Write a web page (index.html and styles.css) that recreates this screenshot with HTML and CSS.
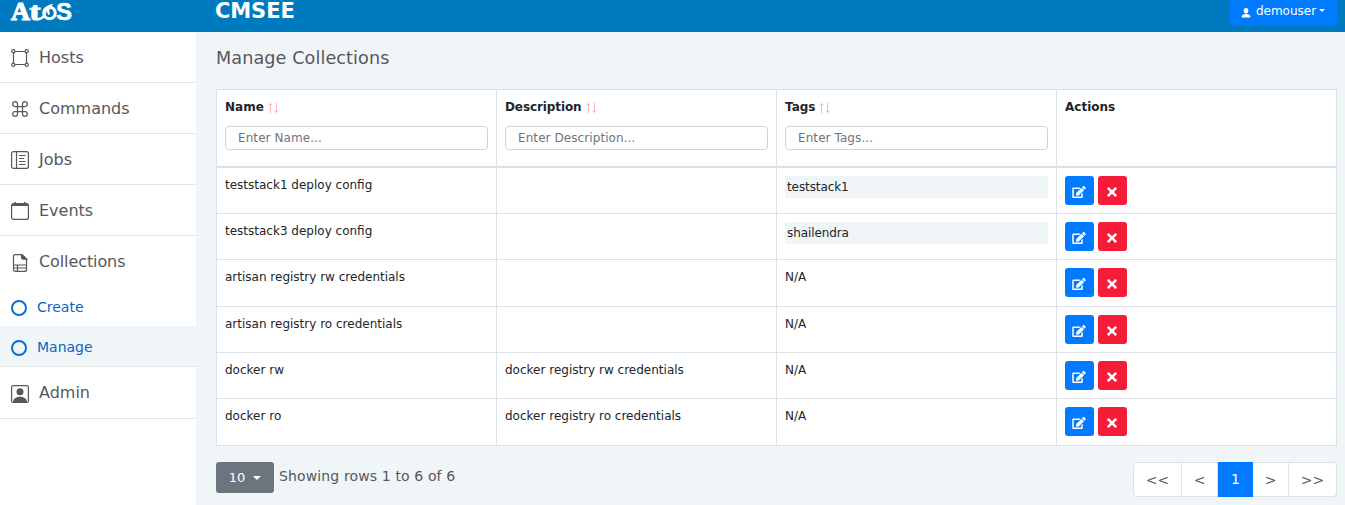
FILE: index.html
```html
<!DOCTYPE html>
<html lang="en">
<head>
<meta charset="utf-8">
<title>CMSEE</title>
<link rel="stylesheet" href="styles.css">
</head>
<body>
<svg class="defs" width="0" height="0">
  <symbol id="edit" viewBox="0 0 576 512"><path fill="currentColor" d="M402.6 83.200l90.200 90.200c3.800 3.800 3.800 10 0 13.800L274.400 405.600l-92.800 10.300c-12.400 1.400-22.900-9.100-21.500-21.500l10.300-92.800L388.800 83.200c3.800-3.800 10-3.800 13.800 0zm162-22.900l-48.800-48.800c-15.200-15.200-39.900-15.200-55.200 0l-35.400 35.400c-3.800 3.800-3.800 10 0 13.800l90.200 90.200c3.800 3.800 10 3.800 13.800 0l35.400-35.400c15.200-15.300 15.200-40 0-55.200zM384 346.200V448H64V128h229.800c3.200 0 6.200-1.300 8.500-3.500l40-40c7.600-7.600 2.200-20.500-8.500-20.500H48C21.500 64 0 85.500 0 112v352c0 26.500 21.500 48 48 48h352c26.500 0 48-21.500 48-48V306.200c0-10.700-12.900-16-20.500-8.500l-40 40c-2.200 2.300-3.500 5.300-3.500 8.500z"/></symbol>
  <symbol id="times" viewBox="0 0 352 512"><path fill="currentColor" d="M242.720 256l100.070-100.070c12.280-12.280 12.280-32.190 0-44.480l-22.240-22.240c-12.280-12.280-32.190-12.280-44.480 0L176 189.280 75.930 89.210c-12.280-12.280-32.190-12.280-44.480 0L9.210 111.450c-12.280 12.280-12.280 32.190 0 44.480L109.280 256 9.210 356.070c-12.280 12.280-12.280 32.190 0 44.480l22.240 22.240c12.280 12.280 32.200 12.280 44.480 0L176 322.720l100.070 100.070c12.280 12.280 32.200 12.280 44.480 0l22.240-22.240c12.280-12.280 12.280-32.190 0-44.480L242.720 256z"/></symbol>
  <symbol id="sort" viewBox="0 0 12 12"><path d="M2.500 11.500V1M.5 3.500l2-2 2 2M8.500 .5V11M6.500 8.500l2 2 2-2" fill="none" stroke="#fdb5b9"/></symbol>
</svg>
<header class="topbar">
  <svg class="logo" width="62" height="24" viewBox="0 0 62 24" fill="#fff">
    <text class="logo-text" x="0" y="20" textLength="19" lengthAdjust="spacingAndGlyphs">A</text>
    <text class="logo-text" x="18.500" y="20" textLength="11" lengthAdjust="spacingAndGlyphs">t</text>
    <ellipse cx="38.500" cy="13" rx="5.800" ry="5.800" fill="none" stroke="#fff" stroke-width="3"/>
    <path d="M28 18.500c4 .5 5.500-3 6.500-7 .7-3 2.500-5.500 5-6-2.500 3-3 6-1.500 9" fill="none" stroke="#fff" stroke-width="2.200"/>
    <text class="logo-s" x="45" y="20" textLength="16" lengthAdjust="spacingAndGlyphs">S</text>
  </svg>
  <div class="brand">CMSEE</div>
  <button class="user"><svg width="10" height="10" viewBox="0 0 10 10" fill="#fff"><ellipse cx="5" cy="2.700" rx="2.300" ry="2.700"/><path d="M.5 9.500C.5 6.500 3 6 5 6s4.500.5 4.500 3.500z"/></svg><span>demouser</span><i class="caret"></i></button>
</header>
<div class="layout">
<nav class="side">
  <a class="item"><svg class="ic" viewBox="0 0 18 18" fill="none" stroke="#58575c"><path d="M3.500 2.500h11M3.500 15.500h11M2.500 3.500v11M15.500 3.500v11" stroke-width="1.200"/><g stroke-width="1.200"><circle cx="2.300" cy="2.300" r="1.600"/><circle cx="15.700" cy="2.300" r="1.600"/><circle cx="2.300" cy="15.700" r="1.600"/><circle cx="15.700" cy="15.700" r="1.600"/></g></svg><span>Hosts</span></a>
  <a class="item"><svg class="ic" viewBox="0 0 18 18" fill="none" stroke="#58575c" stroke-width="1.250"><path d="M6.500 6.500h5v5h-5zM6.500 6.500H4a2.400 2.400 0 1 1 2.500-2.500zM11.500 6.500V4A2.400 2.400 0 1 1 14 6.500zM11.500 11.500H14a2.400 2.400 0 1 1-2.500 2.500zM6.500 11.500V14A2.400 2.400 0 1 1 4 11.500z"/></svg><span>Commands</span></a>
  <a class="item"><svg class="ic" viewBox="0 0 18 18" fill="none" stroke="#58575c" stroke-width="1.200"><rect x=".6" y=".6" width="16.800" height="16.800" rx="2"/><path d="M5.500 1v16M8 4.500h6.500M8 7.500h5M8 10.500h6.500M8 13.500h6.500"/></svg><span>Jobs</span></a>
  <a class="item"><svg class="ic" viewBox="0 0 18 18"><rect x=".6" y="1.600" width="16.800" height="15.800" rx="2" fill="none" stroke="#58575c" stroke-width="1.200"/><path d="M1 4V2.500Q1 1.500 2.500 1.500h13Q17 1.500 17 2.500V4zM3.500 0H5v2H3.500zM13 0h1.500v2H13z" fill="#58575c"/></svg><span>Events</span></a>
  <a class="item parent"><svg class="ic" viewBox="0 0 18 18" fill="none" stroke="#58575c" stroke-width="1.200"><path d="M4.500.6H11l4.500 4.500v10.300q0 2-2 2h-9q-2 0-2-2v-13q0-1.800 2-1.800zM2.500 11h13M2.500 14h13M6.500 11v6.500"/><path d="M10.500.6v3q0 1.500 1.500 1.500h3.500z" fill="#58575c"/></svg><span>Collections</span></a>
  <a class="sub"><i class="ring"></i>Create</a>
  <a class="sub active"><i class="ring"></i><span>Manage</span></a>
  <a class="item admin"><svg class="ic" viewBox="0 0 18 18"><rect x=".6" y=".6" width="16.800" height="16.800" rx="1.500" fill="none" stroke="#58575c" stroke-width="1.200"/><circle cx="9" cy="6.700" r="3.500" fill="#58575c"/><path d="M2 17.500C2 13 6 11.700 9 11.700s7 1.300 7 5.800z" fill="#58575c"/></svg><span>Admin</span></a>
</nav>
<main class="main">
  <h1 class="title">Manage Collections</h1>
  <table class="grid">
    <thead><tr>
      <th><div class="label"><span class="b">Name</span><svg class="sort"><use href="#sort"/></svg></div><input class="filter" placeholder="Enter Name..."></th>
      <th><div class="label"><span class="b long">Description</span><svg class="sort"><use href="#sort"/></svg></div><input class="filter desc" placeholder="Enter Description..."></th>
      <th><div class="label"><span class="b">Tags</span><svg class="sort"><use href="#sort"/></svg></div><input class="filter" placeholder="Enter Tags..."></th>
      <th><div class="label"><span class="b">Actions</span></div></th>
    </tr></thead>
    <tbody>
      <tr><td>teststack1 deploy config</td><td></td><td><div class="tag">teststack1</div></td><td><div class="acts"><button class="act"><svg class="e"><use href="#edit"/></svg></button><button class="act del"><svg class="x"><use href="#times"/></svg></button></div></td></tr>
      <tr><td>teststack3 deploy config</td><td></td><td><div class="tag">shailendra</div></td><td><div class="acts"><button class="act"><svg class="e"><use href="#edit"/></svg></button><button class="act del"><svg class="x"><use href="#times"/></svg></button></div></td></tr>
      <tr class="tall"><td>artisan registry rw credentials</td><td></td><td>N/A</td><td><div class="acts"><button class="act"><svg class="e"><use href="#edit"/></svg></button><button class="act del"><svg class="x"><use href="#times"/></svg></button></div></td></tr>
      <tr><td>artisan registry ro credentials</td><td></td><td>N/A</td><td><div class="acts"><button class="act"><svg class="e"><use href="#edit"/></svg></button><button class="act del"><svg class="x"><use href="#times"/></svg></button></div></td></tr>
      <tr><td>docker rw</td><td>docker registry rw credentials</td><td>N/A</td><td><div class="acts"><button class="act"><svg class="e"><use href="#edit"/></svg></button><button class="act del"><svg class="x"><use href="#times"/></svg></button></div></td></tr>
      <tr class="tall"><td>docker ro</td><td>docker registry ro credentials</td><td>N/A</td><td><div class="acts"><button class="act"><svg class="e"><use href="#edit"/></svg></button><button class="act del"><svg class="x"><use href="#times"/></svg></button></div></td></tr>
    </tbody>
  </table>
  <footer class="foot">
    <button class="size">10<i class="caret"></i></button>
    <span class="showing">Showing rows 1 to 6 of 6</span>
    <div class="pages"><a class="first">&lt;&lt;</a><a>&lt;</a><a class="on">1</a><a>&gt;</a><a class="last">&gt;&gt;</a></div>
  </footer>
</main>
</div>
</body>
</html>
```
FILE: styles.css
```css
* { box-sizing: border-box; }
body { margin: 0; height: 505px; overflow: hidden; font: 12px/18px "DejaVu Sans", Verdana, sans-serif; color: #212529; background: #f0f5f8; }
button { font: inherit; border: 0; padding: 0; color: #fff; }
.defs { display: none; }
.topbar { height: 32px; background: #007abe; display: flex; align-items: flex-start; padding: 0 8px 0 11px; }
.logo { width: 62px; height: 24px; overflow: visible; }
.logo-text { font: bold 25px "Liberation Serif", serif; stroke: #fff; stroke-width: 1.1px; }
.logo-s { font: bold 24px "Liberation Sans", sans-serif; stroke: #fff; stroke-width: .5px; }
.brand { margin-left: 142px; font: bold 21px/22px "DejaVu Sans", sans-serif; letter-spacing: -.1px; color: #fff; }
.user { margin-left: auto; width: 108px; height: 26px; padding: 0 0 5px; background: #007bff; border-radius: 0 0 3px 3px; display: flex; align-items: center; justify-content: center; }
.user svg { margin: 4px 5px 0 0; }
.caret { border: 4px solid transparent; border-top-color: #fff; border-bottom: 0; margin-left: 4px; }
.user .caret { margin-left: 3px; border-width: 3.5px; border-bottom: 0; }
.layout { display: flex; height: 473px; }
.side { width: 196px; background: #fff; }
.item { height: 51px; border-bottom: 1px solid #e3e5e5; display: flex; align-items: center; padding-left: 11px; font-size: 16px; color: #58575c; }
.item span { margin: 2px 0 0 10px; }
.parent span, .admin span { margin-top: 0; }
.ic { width: 18px; height: 18px; margin-top: 2px; }
.parent { border: 0; }
.parent + .sub { height: 39px; }
.parent span { letter-spacing: -.1px; }
.sub { height: 40px; display: flex; align-items: center; padding-left: 11px; font-size: 14px; color: #0b65c4; }
.ring { width: 16px; height: 16px; border: 2px solid #0b70cd; border-radius: 50%; margin: 2px 10px 0 0; }
.active { height: 41px; background: #f0f5f8; border-bottom: 1px solid #e3e5e5; }
.active .ring { margin-top: 3px; }
.active span { margin-top: 2px; }
.admin { height: 52px; }
.main { flex: 1; padding: 14px 8px 0 20px; }
.title { margin: 0; font-size: 17.600px; letter-spacing: .1px; font-weight: 400; line-height: 24px; height: 43px; color: #58575c; }
.grid { width: 1121px; table-layout: fixed; border-collapse: separate; border-spacing: 0; background: #fff; border-top: 1px solid #dbe1e5; border-left: 1px solid #dbe1e5; }
.grid th, .grid td { vertical-align: top; text-align: left; border-right: 1px solid #dbe1e5; border-bottom: 1px solid #dbe1e5; padding: 8px 8px 0; }
.grid th { height: 78px; border-bottom-width: 2px; }
.grid td { height: 46px; }
.grid .tall td { height: 47px; }
.label { display: flex; height: 28px; }
.long { letter-spacing: -.1px; }
.sort { width: 12px; height: 12px; margin: 4px 0 0 4px; }
.filter { display: block; width: 263px; height: 24px; padding: 0 12px; border: 1px solid #ced4da; border-radius: 4px; font: inherit; font-weight: 400; letter-spacing: .08px; background: #fff; }
.filter::placeholder { color: #6c757d; opacity: 1; }
.tag { height: 22px; background: #f0f5f8; padding: 2px; letter-spacing: -.1px; }
.acts { display: flex; gap: 4px; }
.act { width: 29px; height: 29px; background: #007bff; border-radius: 3px; display: grid; place-items: center; padding: 3px 2px 0 0; }
.del { background: #f51c38; }
.e { width: 14px; height: 12px; }
.x { width: 10px; height: 14px; }
.foot { display: flex; margin-top: 16px; align-items: flex-start; }
.size { width: 58px; height: 31px; border-radius: 3px; background: #6c757d; font-size: 13px; display: flex; align-items: center; justify-content: center; }
.size .caret { margin-left: 8px; }
.showing { font-size: 14px; letter-spacing: .13px; color: #58575c; margin: 5px 0 0 5px; }
.pages { margin-left: auto; display: flex; height: 35px; background: #fff; border: 1px solid #dee2e6; border-radius: 4px; font-size: 14px; line-height: 35px; text-align: center; color: #58606a; }
.pages a { width: 36px; border-right: 1px solid #dee2e6; }
.pages .first { width: 48px; }
.pages .last { width: 47px; border: 0; }
.pages .on { width: 35px; background: #007bff; color: #fff; margin: -1px 0; border: 0; }
```
